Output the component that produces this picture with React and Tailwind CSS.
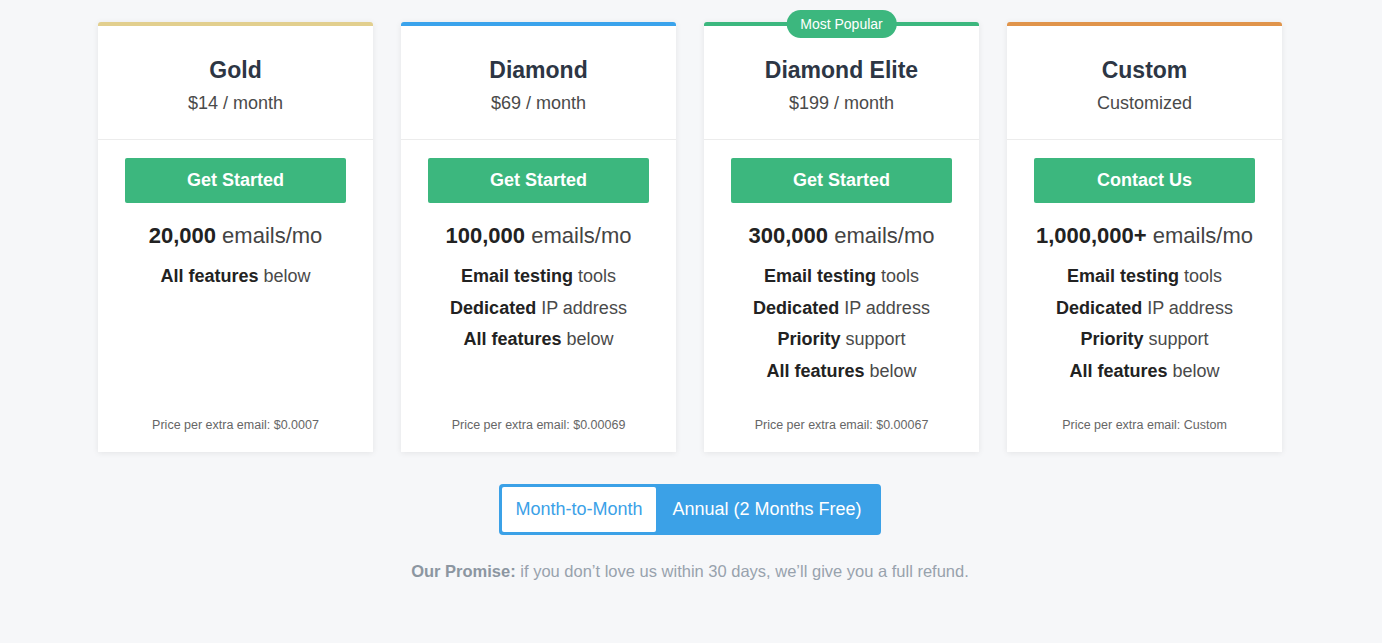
import React from 'react'

const plans = [
    {
        name: 'Gold',
        price: '$14 / month',
        border: 'border-[#e2cf8e]',
        cta: 'Get Started',
        emails: '20,000',
        features: [['All features', 'below']],
        extra: '$0.0007',
    },
    {
        name: 'Diamond',
        price: '$69 / month',
        border: 'border-[#3aa3ec]',
        cta: 'Get Started',
        emails: '100,000',
        features: [['Email testing', 'tools'], ['Dedicated', 'IP address'], ['All features', 'below']],
        extra: '$0.00069',
    },
    {
        name: 'Diamond Elite',
        price: '$199 / month',
        border: 'border-[#3cb77e]',
        cta: 'Get Started',
        emails: '300,000',
        popular: true,
        features: [['Email testing', 'tools'], ['Dedicated', 'IP address'], ['Priority', 'support'], ['All features', 'below']],
        extra: '$0.00067',
    },
    {
        name: 'Custom',
        price: 'Customized',
        border: 'border-[#e0944b]',
        cta: 'Contact Us',
        emails: '1,000,000+',
        features: [['Email testing', 'tools'], ['Dedicated', 'IP address'], ['Priority', 'support'], ['All features', 'below']],
        extra: 'Custom',
    },
]

function PlanCard({plan}) {
    return (
        <div className={`relative flex flex-col bg-white border-t-4 rounded-t-[3px] shadow-[0_1px_6px_rgba(0,0,0,0.08)] ${plan.border}`}>
            {plan.popular && (
                <div className="absolute left-1/2 -translate-x-1/2 -top-[16px] h-[28px] px-[14px] flex items-center rounded-full bg-[#3cb77e] text-white text-[14px]">
                    Most Popular
                </div>
            )}
            <div className="text-center pt-[28px] pb-[24px] border-b border-[#ececec]">
                <h2 className="text-[23px] leading-[32px] font-bold text-[#2d3644]">{plan.name}</h2>
                <p className="mt-[5px] text-[18px] leading-[24px] text-[#4a4a4a]">{plan.price}</p>
            </div>
            <div className="flex flex-col flex-1 items-center px-[27px] pt-[18px] pb-[19px] text-center">
                <button className="w-full h-[45px] rounded-[2px] bg-[#3cb77e] text-white text-[18px] font-bold">{plan.cta}</button>
                <p className="mt-[18px] text-[22px] leading-[30px] text-[#444]">
                    <span className="font-bold text-[#222]">{plan.emails}</span> emails/mo
                </p>
                <ul className="mt-[10px] mb-[30px] text-[18px] leading-[31.5px] text-[#4a4a4a]">
                    {plan.features.map(([b, rest]) => (
                        <li key={b}><span className="font-bold text-[#222]">{b}</span> {rest}</li>
                    ))}
                </ul>
                <p className="mt-auto text-[12.5px] leading-[16px] text-[#666]">Price per extra email: {plan.extra}</p>
            </div>
        </div>
    )
}

export default function App() {
    return (
        <div className="min-h-screen bg-[#f6f7f9] font-['Liberation_Sans',Arial,sans-serif] pt-[22px]">
            <div className="w-[1186px] pr-[2px] mx-auto grid grid-cols-4 gap-[28px]">
                {plans.map(plan => <PlanCard key={plan.name} plan={plan} />)}
            </div>
            <div className="flex justify-center pr-[2px] mt-[32px]">
                <div className="flex p-[3px] rounded-[4px] bg-[#3ba1e7]">
                    <button className="w-[154px] h-[45px] rounded-[2px] bg-white text-[18px] text-[#3ba1e7]">Month-to-Month</button>
                    <button className="w-[222px] h-[45px] text-[18px] text-white">Annual (2 Months Free)</button>
                </div>
            </div>
            <p className="mt-[26px] pr-[2px] text-center text-[16.5px] leading-[20px] text-[#98a2ad]">
                <span className="font-bold text-[#8c96a1]">Our Promise:</span> if you don’t love us within 30 days, we’ll give you a full refund.
            </p>
        </div>
    )
}
